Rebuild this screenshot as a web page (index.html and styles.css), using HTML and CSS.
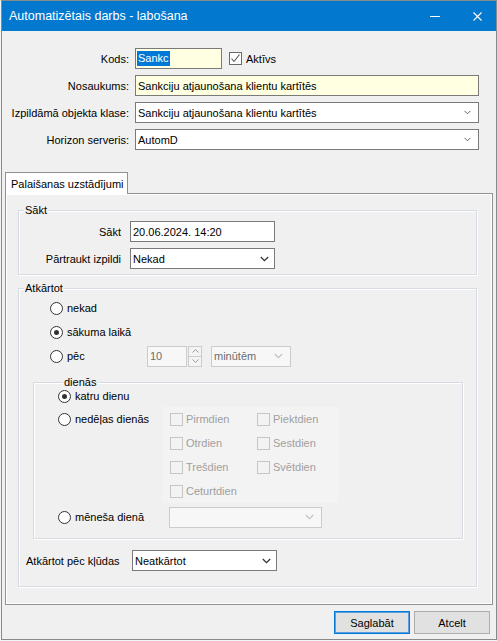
FILE: index.html
```html
<!DOCTYPE html>
<html lang="lv">
<head>
<meta charset="utf-8">
<title>Automatizētais darbs - labošana</title>
<link rel="stylesheet" href="styles.css">
</head>
<body>
<div class="window">
  <div class="titlebar">
    <span class="title">Automatizētais darbs - labošana</span>
    <span class="min-ico"></span>
    <svg class="close-ico" width="9" height="9" viewBox="0 0 9 9"><path d="M0.5 0.5 L8.5 8.5 M8.5 0.5 L0.5 8.5" stroke="#fff" stroke-width="1.1" fill="none"/></svg>
  </div>
  <div class="content">
    <div class="form">
      <span class="lbl">Kods:</span>
      <div class="kods-row">
        <div class="field yellow kods"><span class="selected">Sankc</span></div>
        <span class="check on"><svg width="11" height="11" viewBox="0 0 11 11"><path d="M1.5 5.5 L4 8.5 L9.5 1.5" stroke="#555" stroke-width="1.1" fill="none"/></svg></span>
        <span class="check-text">Aktīvs</span>
      </div>
      <span class="lbl">Nosaukums:</span>
      <div class="field yellow">Sankciju atjaunošana klientu kartītēs</div>
      <span class="lbl">Izpildāmā objekta klase:</span>
      <div class="field select"><span class="val">Sankciju atjaunošana klientu kartītēs</span><svg class="chev" width="7" height="5" viewBox="0 0 7 5"><path d="M0.5 0.8 L3.5 3.8 L6.5 0.8" stroke="#666" fill="none"/></svg></div>
      <span class="lbl">Horizon serveris:</span>
      <div class="field select"><span class="val">AutomD</span><svg class="chev" width="7" height="5" viewBox="0 0 7 5"><path d="M0.5 0.8 L3.5 3.8 L6.5 0.8" stroke="#666" fill="none"/></svg></div>
    </div>

    <div class="tabs">
      <div class="tabstrip"><div class="tab">Palaišanas uzstādījumi</div></div>
      <div class="panel">
        <div class="group g-start">
          <div class="gtitle">Sākt</div>
          <div class="start-grid">
            <span class="lbl">Sākt</span>
            <div class="field">20.06.2024. 14:20</div>
            <span class="lbl">Pārtraukt izpildi</span>
            <div class="field select"><span class="val">Nekad</span><svg class="chev dark" width="9" height="6" viewBox="0 0 9 6"><path d="M0.8 1 L4.5 4.6 L8.2 1" stroke="#333" stroke-width="1.3" fill="none"/></svg></div>
          </div>
        </div>

        <div class="group g-repeat">
          <div class="gtitle">Atkārtot</div>
          <div class="ropts">
            <div class="ropt"><span class="radio"></span><span class="rtext">nekad</span></div>
            <div class="ropt"><span class="radio on"></span><span class="rtext">sākuma laikā</span></div>
            <div class="ropt">
              <div class="ritem"><span class="radio"></span><span class="rtext">pēc</span></div>
              <div class="spin">
                <div class="field dis spin-input">10</div>
                <div class="spin-btns">
                  <span class="sbtn"><svg width="7" height="4" viewBox="0 0 7 4"><path d="M0.5 3.5 L3.5 0.5 L6.5 3.5" stroke="#9a9a9a" fill="none"/></svg></span>
                  <span class="sbtn"><svg width="7" height="4" viewBox="0 0 7 4"><path d="M0.5 0.5 L3.5 3.5 L6.5 0.5" stroke="#9a9a9a" fill="none"/></svg></span>
                </div>
              </div>
              <div class="field select dis minutes"><span class="val">minūtēm</span><svg class="chev" width="9" height="6" viewBox="0 0 9 6"><path d="M0.8 1 L4.5 4.6 L8.2 1" stroke="#c2c2c2" stroke-width="1.2" fill="none"/></svg></div>
            </div>
          </div>

          <div class="group g-days">
            <div class="gtitle">dienās</div>
            <div class="drow katru"><span class="radio on"></span><span class="rtext">katru dienu</span></div>
            <div class="days-grid">
              <div class="drow nedelas"><span class="radio"></span><span class="rtext">nedēļas dienās</span></div>
              <div class="weekdays">
                <div class="wd"><span class="check dis"></span><span>Pirmdien</span></div>
                <div class="wd"><span class="check dis"></span><span>Piektdien</span></div>
                <div class="wd"><span class="check dis"></span><span>Otrdien</span></div>
                <div class="wd"><span class="check dis"></span><span>Sestdien</span></div>
                <div class="wd"><span class="check dis"></span><span>Trešdien</span></div>
                <div class="wd"><span class="check dis"></span><span>Svētdien</span></div>
                <div class="wd"><span class="check dis"></span><span>Ceturtdien</span></div>
              </div>
              <div class="drow menesa"><span class="radio"></span><span class="rtext">mēneša dienā</span></div>
              <div class="menesa-cell">
                <div class="field select dis month"><span class="val"></span><svg class="chev" width="9" height="6" viewBox="0 0 9 6"><path d="M0.8 1 L4.5 4.6 L8.2 1" stroke="#c2c2c2" stroke-width="1.2" fill="none"/></svg></div>
              </div>
            </div>
          </div>

          <div class="err-row">
            <span class="err-lbl">Atkārtot pēc kļūdas</span>
            <div class="field select err"><span class="val">Neatkārtot</span><svg class="chev dark" width="9" height="6" viewBox="0 0 9 6"><path d="M0.8 1 L4.5 4.6 L8.2 1" stroke="#333" stroke-width="1.3" fill="none"/></svg></div>
          </div>
        </div>
      </div>
    </div>

    <div class="buttons">
      <div class="btn default">Saglabāt</div>
      <div class="btn">Atcelt</div>
    </div>
  </div>
</div>
</body>
</html>
```
FILE: styles.css
```css
* { box-sizing: border-box; }
html, body { margin: 0; padding: 0; }
body {
  background: #f4f4f4;
  font-family: "Liberation Sans", Arial, sans-serif;
  font-size: 11px;
  color: #000;
}
.window {
  width: 496px;
  margin-left: 1px;
  border: 1px solid #8a8a8a;
  background: #f0f0f0;
}
.titlebar {
  height: 30px;
  background: #0279cf;
  color: #fff;
  display: flex;
  align-items: center;
  padding: 0 14px 0 7px;
}
.title { flex: 1; font-size: 12.5px; }
.min-ico { width: 10px; height: 1px; background: #fff; margin-right: 33px; }
.close-ico { display: block; }

.content { padding-top: 17px; }

.form {
  display: grid;
  grid-template-columns: 127px 344px;
  grid-auto-rows: 21px;
  column-gap: 6px;
  row-gap: 6px;
}
.lbl {
  display: flex;
  align-items: center;
  justify-content: flex-end;
  white-space: nowrap;
}
.field {
  height: 21px;
  border: 1px solid #7a7a7a;
  background: #fff;
  display: flex;
  align-items: center;
  padding: 0 0 0 2px;
  white-space: nowrap;
  overflow: hidden;
}
.field.yellow { background: #ffffe1; }
.select { padding-right: 7px; }
.select .val { flex: 1; }
.chev { display: block; flex: none; }
.chev.dark { margin-right: -2px; }
.kods-row { display: flex; align-items: center; }
.kods { width: 87px; }
.selected {
  background: #0078d7;
  color: #fff;
  line-height: 15px;
  padding: 0 1px;
  margin-left: -1px;
}
.check {
  width: 13px;
  height: 13px;
  border: 1px solid #6a6a6a;
  background: #fff;
  display: flex;
  align-items: center;
  justify-content: center;
  flex: none;
}
.kods-row .check { margin-left: 7px; }
.check-text { margin-left: 4px; }
.check.dis { border-color: #c6c6c6; background: transparent; }

.tabs { margin: 22px 3px 0 3px; }
.tabstrip { display: flex; }
.tab {
  width: 123px;
  height: 22px;
  border: 1px solid #919191;
  border-bottom: none;
  background: #fff;
  padding-left: 5px;
  display: flex;
  align-items: center;
  margin-bottom: -1px;
  position: relative;
  z-index: 1;
  white-space: nowrap;
}
.panel {
  border: 1px solid #919191;
  box-shadow: inset 1px 1px 0 #fff, inset -1px -1px 0 #fff;
  padding: 16px 15px 17px 12px;
}

.group {
  border: 1px solid #d5dbe0;
  box-shadow: 1px 1px 0 #fff, inset 1px 1px 0 #fff;
}
.gtitle {
  width: fit-content;
  margin: -7px 0 0 5px;
  padding: 0 1px;
  line-height: 13px;
  background: #f0f0f0;
}
.g-start { padding-bottom: 5px; }
.start-grid {
  margin-top: 4px;
  display: grid;
  grid-template-columns: 102px 145px;
  grid-auto-rows: 21px;
  column-gap: 9px;
  row-gap: 6px;
}

.g-repeat { margin-top: 13px; padding-bottom: 15px; }
.ropts { margin-top: 1px; }
.ropt {
  height: 24px;
  display: flex;
  align-items: center;
  padding-left: 31px;
}
.ritem { width: 97px; display: flex; align-items: center; }
.radio {
  width: 13px;
  height: 13px;
  border: 1px solid #333;
  border-radius: 50%;
  background: #fff;
  display: flex;
  align-items: center;
  justify-content: center;
  flex: none;
}
.radio.on::after {
  content: "";
  width: 5px;
  height: 5px;
  border-radius: 50%;
  background: #333;
}
.rtext { margin-left: 4px; white-space: nowrap; }

.field.dis { border-color: #cccccc; background: #f7f7f7; color: #6d6d6d; }
.spin { display: flex; }
.spin-input { width: 40px; }
.spin-btns { display: flex; flex-direction: column; width: 15px; height: 21px; }
.sbtn {
  flex: 1;
  border: 1px solid #cccccc;
  margin-left: 1px;
  background: #f4f4f4;
  display: flex;
  align-items: center;
  justify-content: center;
}
.sbtn + .sbtn { border-top: none; }
.minutes { width: 80px; margin-left: 9px; }

.g-days { margin: 14px 13px 0 14px; padding: 0 0 9px 24px; }
.drow { display: flex; align-items: center; }
.katru { height: 14px; }
.days-grid {
  margin-top: 4px;
  display: grid;
  grid-template-columns: 104px 176px;
}
.nedelas { height: 24px; align-self: start; }
.weekdays {
  display: grid;
  grid-template-columns: 87px 89px;
  grid-auto-rows: 24px;
  background: #f3f3f3;
  padding-left: 8px;
}
.wd { display: flex; align-items: center; color: #a0a0a0; white-space: nowrap; }
.wd span + span { margin-left: 3px; }
.menesa { height: 24px; margin-top: 2px; }
.menesa-cell { margin-top: 2px; height: 24px; display: flex; align-items: center; }
.month { width: 153px; margin-left: 7px; }

.err-row {
  margin-top: 11px;
  padding-left: 7px;
  display: flex;
  align-items: center;
  height: 21px;
}
.err-lbl { width: 106px; white-space: nowrap; }
.err { width: 145px; }

.buttons {
  margin-top: 6px;
  display: flex;
  justify-content: flex-end;
  gap: 4px;
  padding: 0 6px 5px 0;
}
.btn {
  width: 76px;
  height: 23px;
  border: 1px solid #adadad;
  background: #e1e1e1;
  display: flex;
  align-items: center;
  justify-content: center;
}
.btn.default { border-color: #0078d7; box-shadow: inset 0 0 0 1px #5aa0e0; }
```
